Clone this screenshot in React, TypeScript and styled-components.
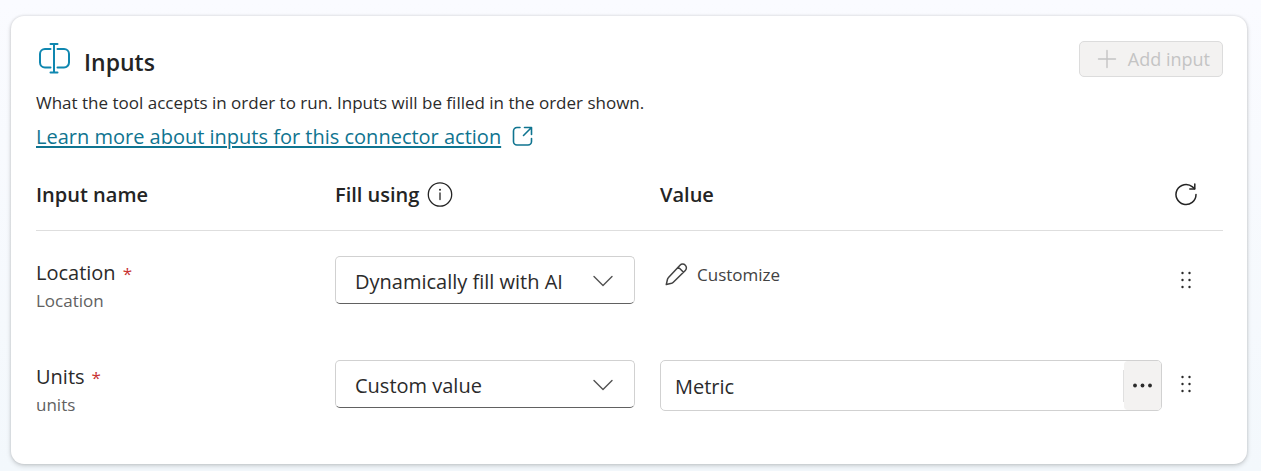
import React from "react";
import styled, { createGlobalStyle } from "styled-components";

const GlobalStyle = createGlobalStyle`
  * { box-sizing: border-box; }
  body {
    margin: 0;
    background: linear-gradient(#fafbff, #f3f8fc);
    color: #2b2b2b;
    font-family: "Open Sans", "Noto Sans", sans-serif;
    font-size: 20px;
  }
  button, input, select { font: inherit; color: inherit; }
`;

const Page = styled.main`
  padding: 16px 14px 7px 11px;
`;

const Card = styled.section`
  padding: 25px 24px 25px 25px;
  background: #fff;
  border-radius: 13px;
  box-shadow: 0 2px 5px rgba(0, 0, 0, 0.16), 0 0 3px rgba(0, 0, 0, 0.14);
`;

const Header = styled.header`
  display: flex;
  align-items: flex-start;
  justify-content: space-between;
  height: 46px;
`;

const TitleGroup = styled.div`
  display: flex;
  align-items: flex-start;
  gap: 14px;
  padding-left: 2px;
`;

const Title = styled.h2`
  margin: 0;
  padding-top: 5px;
  color: #242424;
  font-size: 23px;
  font-weight: 600;
  line-height: 32px;
`;

const AddButton = styled.button`
  display: flex;
  align-items: center;
  gap: 11px;
  height: 36px;
  padding: 0 12px 0 17px;
  border: 1px solid #dcdcdc;
  border-radius: 5px;
  background: #f3f2f1;
  font-size: 18px;
  &:disabled { color: #c4c4c4; }
`;

const Description = styled.p`
  margin: 0;
  font-size: 17px;
  line-height: 32px;
`;

const LearnLink = styled.a`
  display: flex;
  align-items: center;
  gap: 11px;
  width: fit-content;
  height: 36px;
  padding-bottom: 2px;
  color: #0f7490;
  text-decoration: none;
`;

const LinkText = styled.span`
  text-decoration: underline;
  text-decoration-thickness: 2px;
  text-underline-offset: 2px;
`;

const Table = styled.table`
  width: 100%;
  border-collapse: separate;
  border-spacing: 0;
  table-layout: fixed;
`;

const Column = styled.col<{ $width?: number }>`
  width: ${(p) => (p.$width ? `${p.$width}px` : "auto")};
`;

const HeadCell = styled.th`
  height: 76px;
  padding: 4px 0 0;
  border-bottom: 1px solid #dedede;
  color: #242424;
  text-align: left;
  font-weight: 600;
`;

const HeadLabel = styled.span`
  display: flex;
  align-items: center;
  gap: 8px;
`;

const Cell = styled.td`
  height: 104px;
  padding: 25px 0 0;
  vertical-align: top;
`;

const Name = styled.label`
  display: block;
  padding-top: 3px;
  line-height: 28px;
`;

const Required = styled.span`
  margin-left: 7px;
  color: #c83232;
  font-size: 17px;
`;

const Hint = styled.span`
  display: block;
  color: #616161;
  font-size: 17px;
  line-height: 26px;
`;

const SelectBox = styled.div`
  position: relative;
  width: 300px;
  svg {
    position: absolute;
    top: 19px;
    right: 22px;
    pointer-events: none;
  }
`;

const Select = styled.select`
  appearance: none;
  display: block;
  width: 100%;
  height: 48px;
  padding: 2px 48px 0 19px;
  border: 1px solid #d1d1d1;
  border-bottom-color: #616161;
  border-radius: 5px;
  background: #fff;
`;

const PlainButton = styled.button`
  display: flex;
  align-items: center;
  gap: 9px;
  height: 37px;
  padding: 0 5px;
  border: 0;
  background: none;
  color: #424242;
  font-size: 17px;
`;

const IconButton = styled.button<{ $height: number }>`
  display: flex;
  align-items: center;
  justify-content: center;
  width: 48px;
  height: ${(p) => p.$height}px;
  padding: 0;
  border: 0;
  background: none;
`;

const ValueBox = styled.div`
  display: flex;
  align-items: center;
  height: 51px;
  border: 1px solid #d1d1d1;
  border-radius: 5px;
`;

const ValueInput = styled.input`
  flex: 1;
  min-width: 0;
  height: 32px;
  padding: 1px 14px 0;
  border: 0;
  border-right: 1px solid #e0e0e0;
  background: none;
`;

const MoreButton = styled.button`
  display: flex;
  align-items: center;
  justify-content: center;
  width: 37px;
  height: 49px;
  padding: 0;
  border: 0;
  border-radius: 4px;
  background: #f3f2f1;
`;

const stroke = { fill: "none", stroke: "currentColor", strokeLinecap: "round", strokeLinejoin: "round" } as const;

const InputsIcon = () => (
  <svg width="32" height="34" viewBox="0 0 32 34" {...stroke} color="#0f87b0" strokeWidth="2">
    <path d="M12.500 3h7M12.500 31.500h7M16 3v28.500" />
    <path d="M12.500 8H7a5 5 0 0 0-5 5v8.500a5 5 0 0 0 5 5h5.500M19.500 8H26a5 5 0 0 1 5 5v8.500a5 5 0 0 1-5 5h-6.500" />
  </svg>
);

const PlusIcon = () => (
  <svg width="20" height="20" viewBox="0 0 20 20" {...stroke} strokeWidth="1.400">
    <path d="M10 1.500v17M1.500 10h17" />
  </svg>
);

const OpenIcon = () => (
  <svg width="21" height="21" viewBox="0 0 21 21" {...stroke} strokeWidth="1.600">
    <path d="M8 1.500H5A3.500 3.500 0 0 0 1.500 5v10.500A3.500 3.500 0 0 0 5 19h11a3.500 3.500 0 0 0 3.500-3.500v-3M12.500 1.500h7v7M19.500 1.500l-8 8" />
  </svg>
);

const InfoIcon = () => (
  <svg width="26" height="26" viewBox="0 0 26 26" {...stroke} strokeWidth="1.300">
    <circle cx="13" cy="12.500" r="11.700" />
    <path d="M13 11v6.500" />
    <circle cx="13" cy="7.700" r="1" fill="currentColor" stroke="none" />
  </svg>
);

const RefreshIcon = () => (
  <svg width="24" height="24" viewBox="0 0 24 24" {...stroke} strokeWidth="1.500">
    <path d="M22 11.500a10 10 0 1 1-3.500-7.600L20.500 5.700" />
    <path d="M20.800 1v5h-5" />
  </svg>
);

const ChevronIcon = () => (
  <svg width="20" height="12" viewBox="0 0 20 12" {...stroke} strokeWidth="1.400" color="#525252">
    <path d="M1 1.500l9 9 9-9" />
  </svg>
);

const PencilIcon = () => (
  <svg width="23" height="23" viewBox="0 0 23 23" {...stroke} strokeWidth="1.500">
    <path d="M15 2.200a3.700 3.700 0 0 1 5.300 5.300L8.300 19.300a4 4 0 0 1-1.700 1L1.300 21.500l1.200-5.300a4 4 0 0 1 1-1.700zM13.200 4l5.300 5.300" />
  </svg>
);

const MoreIcon = () => (
  <svg width="20" height="6" viewBox="0 0 20 6" fill="currentColor">
    <circle cx="2" cy="2.500" r="1.900" />
    <circle cx="9.500" cy="2.500" r="1.900" />
    <circle cx="17" cy="2.500" r="1.900" />
  </svg>
);

const DragIcon = () => (
  <svg width="12" height="20" viewBox="0 0 12 20" fill="currentColor">
    {[3, 10, 17].map((y) => (
      <React.Fragment key={y}>
        <circle cx="2.500" cy={y} r="1.200" />
        <circle cx="9.500" cy={y} r="1.200" />
      </React.Fragment>
    ))}
  </svg>
);

interface InputRow {
  id: string;
  name: string;
  hint: string;
  fill: string;
  value?: string;
}

const rows: InputRow[] = [
  { id: "location", name: "Location", hint: "Location", fill: "Dynamically fill with AI" },
  { id: "units", name: "Units", hint: "units", fill: "Custom value", value: "Metric" },
];

export default function App() {
  return (
    <>
      <GlobalStyle />
      <Page>
        <Card>
          <Header>
            <TitleGroup>
              <InputsIcon />
              <Title>Inputs</Title>
            </TitleGroup>
            <AddButton type="button" disabled>
              <PlusIcon />
              Add input
            </AddButton>
          </Header>
          <Description>What the tool accepts in order to run. Inputs will be filled in the order shown.</Description>
          <LearnLink href="#inputs">
            <LinkText>Learn more about inputs for this connector action</LinkText>
            <OpenIcon />
          </LearnLink>
          <Table>
            <colgroup>
              <Column $width={299} />
              <Column $width={325} />
              <Column />
              <Column $width={61} />
            </colgroup>
            <thead>
              <tr>
                <HeadCell scope="col">Input name</HeadCell>
                <HeadCell scope="col">
                  <HeadLabel>
                    Fill using
                    <InfoIcon />
                  </HeadLabel>
                </HeadCell>
                <HeadCell scope="col">Value</HeadCell>
                <HeadCell scope="col">
                  <IconButton type="button" $height={28} aria-label="Refresh inputs">
                    <RefreshIcon />
                  </IconButton>
                </HeadCell>
              </tr>
            </thead>
            <tbody>
              {rows.map((row) => (
                <tr key={row.id}>
                  <Cell>
                    <Name htmlFor={`${row.id}-fill`}>
                      {row.name}
                      <Required>*</Required>
                    </Name>
                    <Hint>{row.hint}</Hint>
                  </Cell>
                  <Cell>
                    <SelectBox>
                      <Select id={`${row.id}-fill`} defaultValue={row.fill}>
                        <option>Dynamically fill with AI</option>
                        <option>Custom value</option>
                      </Select>
                      <ChevronIcon />
                    </SelectBox>
                  </Cell>
                  <Cell>
                    {row.value ? (
                      <ValueBox>
                        <ValueInput type="text" aria-label={`${row.name} value`} defaultValue={row.value} />
                        <MoreButton type="button" aria-label="More options">
                          <MoreIcon />
                        </MoreButton>
                      </ValueBox>
                    ) : (
                      <PlainButton type="button">
                        <PencilIcon />
                        Customize
                      </PlainButton>
                    )}
                  </Cell>
                  <Cell>
                    <IconButton type="button" $height={48} aria-label={`Reorder ${row.name}`}>
                      <DragIcon />
                    </IconButton>
                  </Cell>
                </tr>
              ))}
            </tbody>
          </Table>
        </Card>
      </Page>
    </>
  );
}
